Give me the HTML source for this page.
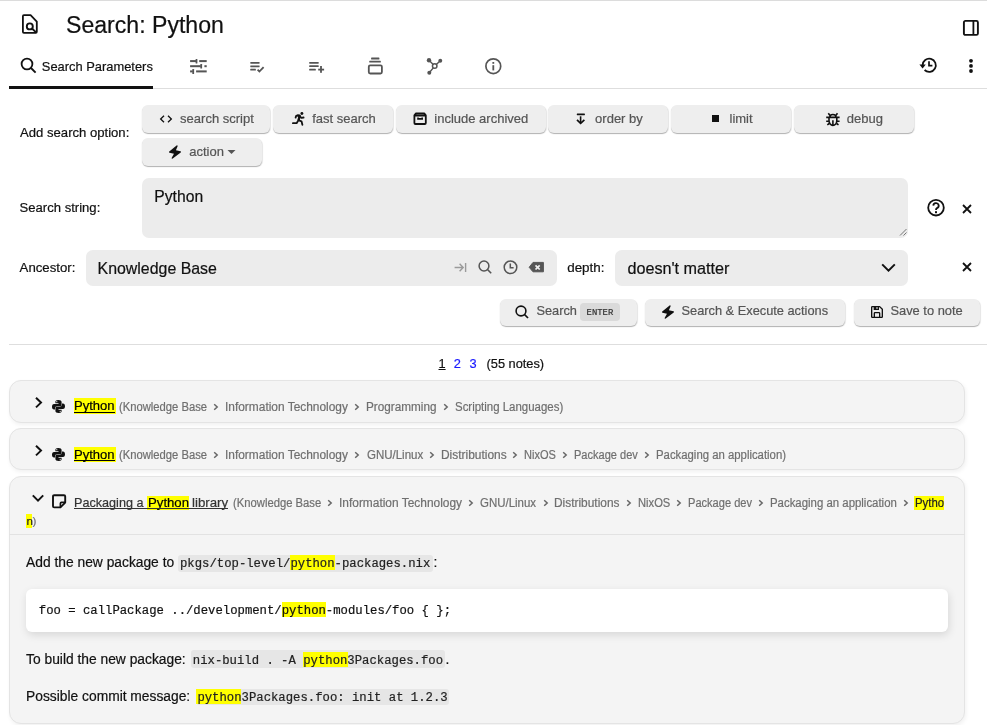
<!DOCTYPE html>
<html><head><meta charset="utf-8">
<style>
html,body{margin:0;padding:0;}
body{width:987px;height:725px;overflow:hidden;background:#fff;position:relative;font-family:"Liberation Sans",sans-serif;color:#222;}
.a{position:absolute;}
.t{position:absolute;line-height:1;white-space:nowrap;-webkit-text-stroke:0.2px currentColor;}
svg{position:absolute;display:block;}
.btn{position:absolute;background:#eeeeee;border-radius:6px;box-shadow:0 1px 1px rgba(0,0,0,.25), 1px 1px 1px rgba(0,0,0,.08);}
.bt{position:absolute;line-height:1;white-space:nowrap;font-size:13px;color:#555;-webkit-text-stroke:0.2px currentColor;}
.inp{position:absolute;background:#ececec;border-radius:7px;}
.card{position:absolute;left:9px;width:956px;background:#f4f4f4;border:1px solid #e4e4e4;border-radius:12px;box-sizing:border-box;box-shadow:1px 2px 4px rgba(0,0,0,.06);}
.bc{color:#777;font-size:11.6px;}
.hl{background:#ffff00;color:#222;}
.u{text-decoration:underline;}
.mono{font-family:"Liberation Mono",monospace;font-size:12.27px;}
.ic{background:#e6e6e6;border-radius:3px;}
#root{position:relative;width:987px;height:725px;overflow:hidden;background:#fff;will-change:transform;}
</style></head><body><div id="root">
<!-- top border -->
<div class="a" style="left:0;top:0;width:987px;height:1px;background:#dcdcdc"></div>

<!-- note icon: file-find -->
<svg style="left:18px;top:10px" width="24" height="28" viewBox="0 0 24 28">
  <path d="M4.9 6.2 Q4.9 5.2 5.9 5.2 H12.6 L18.8 11.6 V21.8 Q18.8 22.8 17.8 22.8 H5.9 Q4.9 22.8 4.9 21.8 Z" fill="none" stroke="#111" stroke-width="1.8" stroke-linejoin="round"/>
  <circle cx="11.8" cy="16.4" r="3" fill="none" stroke="#111" stroke-width="1.9"/>
  <path d="M13.9 18.5 L18.4 22.6" stroke="#111" stroke-width="1.9"/>
</svg>
<div class="t" style="left:66px;top:13.5px;font-size:23.1px;color:#111">Search: Python</div>

<!-- sidebar toggle -->
<svg style="left:962px;top:19px" width="18" height="18" viewBox="0 0 18 18">
  <rect x="1.9" y="1.9" width="14" height="14" rx="1.5" fill="none" stroke="#111" stroke-width="1.9"/>
  <path d="M11.4 2 V16" stroke="#111" stroke-width="1.8"/>
</svg>

<!-- tab bar -->
<div class="a" style="left:9px;top:88px;width:978px;height:1px;background:#dedede"></div>
<div class="a" style="left:9px;top:86px;width:144px;height:3px;background:#111"></div>
<svg style="left:20px;top:57px" width="17" height="17" viewBox="0 0 17 17">
  <circle cx="7" cy="7" r="5.4" fill="none" stroke="#111" stroke-width="1.8"/>
  <path d="M11 11 L15.6 15.6" stroke="#111" stroke-width="1.9"/>
</svg>
<div class="t" style="left:41.8px;top:61.1px;font-size:12.9px;color:#111">Search Parameters</div>

<!-- slider icon -->
<svg style="left:189px;top:58px" width="19" height="17" viewBox="0 0 19 17">
  <g fill="#555">
    <rect x="1.1" y="2.1" width="6" height="2"/><rect x="6.6" y="1" width="1.8" height="4.6" rx=".5"/><rect x="10.2" y="2.1" width="7.5" height="2"/>
    <rect x="1.1" y="7.2" width="10.7" height="2"/><rect x="11.3" y="5.9" width="1.8" height="4.7" rx=".5"/><rect x="15.4" y="7.2" width="2.3" height="2"/>
    <rect x="1.1" y="12.4" width="2.7" height="2"/><rect x="3.3" y="11" width="1.8" height="4.9" rx=".5"/><rect x="7.1" y="12.4" width="10.6" height="2"/>
  </g>
</svg>
<!-- list-check -->
<svg style="left:249px;top:61px" width="16" height="13" viewBox="0 0 16 13">
  <g fill="#555"><rect x="1.3" y="0.9" width="9.3" height="1.8" rx=".4"/><rect x="1.3" y="4.4" width="9.3" height="1.8" rx=".4"/><rect x="1.3" y="7.8" width="5.6" height="1.8" rx=".4"/></g>
  <path d="M8.6 8.6 L10.4 10.5 L14.6 6.1" fill="none" stroke="#555" stroke-width="1.8"/>
</svg>
<!-- list-plus -->
<svg style="left:308px;top:61px" width="17" height="13" viewBox="0 0 17 13">
  <g fill="#555"><rect x="1.2" y="0.9" width="9.5" height="1.8" rx=".4"/><rect x="1.2" y="4.3" width="9.5" height="1.8" rx=".4"/><rect x="1.2" y="7.8" width="6.6" height="1.8" rx=".4"/>
  <rect x="12.1" y="5" width="1.8" height="6.8"/><rect x="10.2" y="7.7" width="5.9" height="1.8"/></g>
</svg>
<!-- collection -->
<svg style="left:367px;top:57px" width="17" height="19" viewBox="0 0 17 19">
  <g fill="#555"><rect x="4.1" y="0.6" width="8.3" height="1.8" rx=".5"/><rect x="2.3" y="3.8" width="11.5" height="1.8" rx=".4"/></g>
  <rect x="1.8" y="8.3" width="13.1" height="8.2" rx="1.4" fill="none" stroke="#555" stroke-width="1.8"/>
</svg>
<!-- network -->
<svg style="left:425px;top:57px" width="19" height="19" viewBox="0 0 19 19">
  <g fill="#555"><circle cx="4" cy="3.3" r="2.2"/><circle cx="15.3" cy="3.7" r="1.95"/><circle cx="4.3" cy="15.7" r="2"/></g>
  <path d="M4 3.3 L9.7 9.1 M15.3 3.7 L9.7 9.1 M4.3 15.7 L9.7 9.1" stroke="#555" stroke-width="1.4"/>
  <circle cx="9.7" cy="9.1" r="2.25" fill="#fff" stroke="#555" stroke-width="1.5"/>
</svg>
<!-- info -->
<svg style="left:484px;top:57px" width="19" height="19" viewBox="0 0 19 19">
  <circle cx="9.3" cy="9.2" r="7.4" fill="none" stroke="#555" stroke-width="1.7"/>
  <rect x="8.4" y="8.2" width="1.8" height="5.2" fill="#555"/><rect x="8.4" y="5" width="1.8" height="1.8" fill="#555"/>
</svg>
<!-- history -->
<svg style="left:918.2px;top:56.4px" width="20" height="18" viewBox="0 0 20 18">
  <path d="M4.6 9.2 A6.6 6.6 0 1 1 6.6 14" fill="none" stroke="#111" stroke-width="1.8"/>
  <path d="M1.4 8.6 L7.8 8.6 L4.6 12.4 Z" fill="#111"/>
  <path d="M11 5.2 V9.6 H14.4" fill="none" stroke="#111" stroke-width="1.7"/>
</svg>
<!-- dots -->
<svg style="left:967px;top:57px" width="8" height="18" viewBox="0 0 8 18">
  <g fill="#111"><circle cx="4" cy="3.8" r="1.9"/><circle cx="4" cy="8.9" r="1.9"/><circle cx="4" cy="14" r="1.9"/></g>
</svg>

<!-- ===== Search options ===== -->
<div class="t" style="left:20.1px;top:126.1px;font-size:13.1px;color:#111">Add search option:</div>

<div class="btn" style="left:142px;top:105px;width:128px;height:28px"></div>
<svg style="left:158px;top:111px" width="16" height="16" viewBox="0 0 24 24"><path fill="#111" d="M8.293 6.293 2.586 12l5.707 5.707 1.414-1.414L5.414 12l4.293-4.293zm7.414 11.414L21.414 12l-5.707-5.707-1.414 1.414L18.586 12l-4.293 4.293z"/></svg>
<div class="bt" style="left:180.1px;top:111.7px">search script</div>

<div class="btn" style="left:273px;top:105px;width:120px;height:28px"></div>
<svg style="left:286px;top:106px" width="24" height="24" viewBox="0 0 24 24">
  <circle cx="15.9" cy="7.5" r="1.45" fill="#111"/>
  <path d="M11.4 9.4 L13.6 9.8 L12.6 14.2" fill="none" stroke="#111" stroke-width="2.4" stroke-linejoin="round"/>
  <path d="M11.6 9.4 L10.2 9.9 L9.6 11.6 M13.4 10 L15.4 11.8 L17.6 11.5 M12.4 14.3 L10.6 17.2 L6.9 17.2 M12.8 14.4 L15.5 15.3 L16.4 18.8" fill="none" stroke="#111" stroke-width="1.8" stroke-linejoin="round" stroke-linecap="round"/>
</svg>
<div class="bt" style="left:312.2px;top:111.7px">fast search</div>

<div class="btn" style="left:396px;top:105px;width:150px;height:28px"></div>
<svg style="left:408px;top:106px" width="24" height="24" viewBox="0 0 24 24">
  <path d="M6.4 17 Q6.4 18 7.4 18 H16.8 Q17.8 18 17.8 17 V9.4 L16.2 7.4 H8 L6.4 9.4 Z M6.4 9.5 H17.8" fill="none" stroke="#111" stroke-width="1.8" stroke-linejoin="round"/>
  <path d="M10 11.6 V12.9 H14.2 V11.6" fill="none" stroke="#111" stroke-width="1.6"/>
</svg>
<div class="bt" style="left:434.3px;top:111.7px">include archived</div>

<div class="btn" style="left:548px;top:105px;width:120px;height:28px"></div>
<svg style="left:574px;top:111px" width="14" height="16" viewBox="0 0 14 16">
  <rect x="2.8" y="2.5" width="8.1" height="1.7" rx=".4" fill="#111"/>
  <path d="M6.6 5.3 V12.2" stroke="#111" stroke-width="1.6"/>
  <path d="M3 8.9 L6.6 12.4 L10.4 8.9" fill="none" stroke="#111" stroke-width="1.7"/>
</svg>
<div class="bt" style="left:595.1px;top:111.7px">order by</div>

<div class="btn" style="left:671px;top:105px;width:120px;height:28px"></div>
<div class="a" style="left:712px;top:115px;width:7px;height:7px;background:#111"></div>
<div class="bt" style="left:729.5px;top:111.7px">limit</div>

<div class="btn" style="left:794px;top:105px;width:120px;height:28px"></div>
<svg style="left:820px;top:106px" width="24" height="24" viewBox="0 0 24 24">
  <path d="M9.8 11.4 A3.1 2.9 0 0 1 16 11.4" fill="none" stroke="#111" stroke-width="1.6"/>
  <path d="M9 11.4 V14.6 A3.9 4.8 0 0 0 16.8 14.6 V11.4" fill="none" stroke="#111" stroke-width="1.6"/>
  <path d="M6.2 11.4 H19.6 M6.2 15.2 H8.9 M16.9 15.2 H19.6 M8.3 7.3 L10 9.5 M17.5 7.3 L15.8 9.5 M7.3 18.8 L9.2 17.5 M18.5 18.8 L16.6 17.5 M12.9 14.3 V19.2" fill="none" stroke="#111" stroke-width="1.6"/>
</svg>
<div class="bt" style="left:846.8px;top:111.7px">debug</div>

<div class="btn" style="left:142px;top:138px;width:120px;height:28px"></div>
<svg style="left:167px;top:143px" width="16" height="18" viewBox="0 0 24 24"><path fill="#111" d="M20.98 11.802a.995.995 0 0 0-.738-.771l-6.86-1.716 2.537-5.921a.998.998 0 0 0-.317-1.192.996.996 0 0 0-1.234.024l-11 9a1 1 0 0 0 .39 1.744l6.719 1.681-3.345 5.854A1.001 1.001 0 0 0 8 22a.995.995 0 0 0 .6-.2l12-9a1 1 0 0 0 .38-.998z"/></svg>
<div class="bt" style="left:189.2px;top:144.7px">action</div>
<svg style="left:227px;top:149px" width="9" height="6" viewBox="0 0 9 6"><path d="M0.5 1 H8.5 L4.5 5 Z" fill="#555"/></svg>

<!-- ===== Search string ===== -->
<div class="t" style="left:19.6px;top:201.3px;font-size:13.08px;color:#111">Search string:</div>
<div class="inp" style="left:142px;top:178px;width:766px;height:59.5px"></div>
<svg style="left:896px;top:225px" width="12" height="12" viewBox="0 0 12 12"><path d="M10.5 4 L4 10.5 M10.5 7.5 L7.5 10.5" stroke="#777" stroke-width="1"/></svg>
<div class="t" style="left:154.3px;top:189px;font-size:15.7px;color:#111">Python</div>
<svg style="left:926px;top:198px" width="20" height="20" viewBox="0 0 20 20">
  <circle cx="10" cy="9.7" r="7.8" fill="none" stroke="#111" stroke-width="1.8"/>
  <path d="M7.3 7.6 A2.7 2.6 0 1 1 11 10.1 C10.2 10.5 10 11 10 12" fill="none" stroke="#111" stroke-width="1.8"/>
  <rect x="9" y="13.2" width="2" height="2" fill="#111"/>
</svg>
<svg style="left:960px;top:202px" width="14" height="14" viewBox="0 0 14 14"><path d="M3 3 L11 11 M11 3 L3 11" stroke="#111" stroke-width="1.8"/></svg>

<!-- ===== Ancestor ===== -->
<div class="t" style="left:19.6px;top:261.3px;font-size:13.19px;color:#111">Ancestor:</div>
<div class="inp" style="left:86px;top:250px;width:471px;height:35.5px"></div>
<div class="t" style="left:97.6px;top:261.3px;font-size:15.9px;color:#111">Knowledge Base</div>
<svg style="left:453px;top:261px" width="15" height="13" viewBox="0 0 15 13"><path d="M1.6 6.5 H10 M6.6 2.8 L10.2 6.5 L6.6 10.2 M12.6 2 V11" fill="none" stroke="#9a9a9a" stroke-width="1.4"/></svg>
<svg style="left:477px;top:259px" width="16" height="16" viewBox="0 0 16 16">
  <circle cx="7" cy="7" r="4.9" fill="none" stroke="#555" stroke-width="1.5"/>
  <path d="M10.5 10.5 L14.2 14.2" stroke="#555" stroke-width="1.6"/>
</svg>
<svg style="left:502px;top:259px" width="17" height="17" viewBox="0 0 17 17">
  <circle cx="8.5" cy="8.3" r="6.3" fill="none" stroke="#555" stroke-width="1.5"/>
  <path d="M8.3 4.6 V8.7 H11.6" fill="none" stroke="#555" stroke-width="1.5"/>
</svg>
<svg style="left:528px;top:261px" width="17" height="13" viewBox="0 0 17 13">
  <path d="M1.2 6.3 L5 1.4 H15.4 V10.8 H5 Z" fill="#555" stroke="#555" stroke-width="1" stroke-linejoin="round"/>
  <path d="M7.5 4.3 L11.7 8.5 M11.7 4.3 L7.5 8.5" stroke="#eee" stroke-width="1.7"/>
</svg>
<div class="t" style="left:567.2px;top:260.9px;font-size:13.4px;color:#111">depth:</div>
<div class="inp" style="left:615px;top:250px;width:293px;height:35.5px"></div>
<div class="t" style="left:627.4px;top:260.19px;font-size:16.2px;color:#111">doesn't matter</div>
<svg style="left:880px;top:261px" width="17" height="13" viewBox="0 0 17 13"><path d="M2.2 3.4 L8.5 9.6 L14.8 3.4" fill="none" stroke="#111" stroke-width="2"/></svg>
<svg style="left:960px;top:260px" width="14" height="14" viewBox="0 0 14 14"><path d="M3 3 L11 11 M11 3 L3 11" stroke="#111" stroke-width="1.8"/></svg>

<!-- ===== action buttons ===== -->
<div class="btn" style="left:499.5px;top:298.5px;width:137px;height:27.5px"></div>
<svg style="left:514px;top:304px" width="16" height="16" viewBox="0 0 16 16">
  <circle cx="7" cy="7" r="4.9" fill="none" stroke="#111" stroke-width="1.6"/>
  <path d="M10.5 10.5 L14 14" stroke="#111" stroke-width="1.7"/>
</svg>
<div class="bt" style="left:536.4px;top:305.3px;font-size:12.8px">Search</div>
<div class="a" style="left:580.3px;top:303px;width:39.7px;height:17.9px;background:#dadada;border-radius:4px"></div>
<div class="t" style="left:586.6px;top:308.8px;font-size:8.9px;color:#333;font-weight:normal;font-family:'Liberation Mono',monospace">ENTER</div>

<div class="btn" style="left:644.5px;top:298.5px;width:200.5px;height:27.5px"></div>
<svg style="left:660px;top:303px" width="16" height="18" viewBox="0 0 24 24"><path fill="#111" d="M20.98 11.802a.995.995 0 0 0-.738-.771l-6.86-1.716 2.537-5.921a.998.998 0 0 0-.317-1.192.996.996 0 0 0-1.234.024l-11 9a1 1 0 0 0 .39 1.744l6.719 1.681-3.345 5.854A1.001 1.001 0 0 0 8 22a.995.995 0 0 0 .6-.2l12-9a1 1 0 0 0 .38-.998z"/></svg>
<div class="bt" style="left:681.5px;top:305.3px;font-size:12.8px">Search &amp; Execute actions</div>

<div class="btn" style="left:853.5px;top:298.5px;width:126px;height:27.5px"></div>
<svg style="left:869px;top:304px" width="16" height="16" viewBox="0 0 24 24"><path fill="#111" d="M5 21h14a2 2 0 0 0 2-2V8a1 1 0 0 0-.29-.71l-4-4A1 1 0 0 0 16 3H5a2 2 0 0 0-2 2v14a2 2 0 0 0 2 2zm10-2H9v-5h6zM13 7h-2V5h2zM5 5h2v4h8V5h.59L19 8.41V19h-2v-5a2 2 0 0 0-2-2H9a2 2 0 0 0-2 2v5H5z"/></svg>
<div class="bt" style="left:890.4px;top:305.3px;font-size:12.9px">Save to note</div>

<div class="a" style="left:9px;top:344px;width:978px;height:1px;background:#dedede"></div>

<!-- pagination -->
<div class="t" style="left:438.5px;top:358.2px;font-size:12.8px;color:#111"><span class="u">1</span></div>
<div class="t" style="left:453.8px;top:358.2px;font-size:12.8px;color:#1a1aff">2</div>
<div class="t" style="left:469.4px;top:358.2px;font-size:12.8px;color:#1a1aff">3</div>
<div class="t" style="left:486.5px;top:358.2px;font-size:12.8px;color:#111">(55 notes)</div>

<!-- RESULTS -->
<div class="card" style="top:380px;height:42.5px"></div>
<div class="t" style="left:118.6px;top:400.64px;font-size:12.0px;color:#6f6f6f;transform:scaleX(0.9368);transform-origin:0 0">(Knowledge Base</div>
<svg style="left:212.9px;top:402.8px" width="6" height="8" viewBox="0 0 6 8"><path d="M1.2 1.2 L4.2 4 L1.2 6.8" fill="none" stroke="#666" stroke-width="1.5"/></svg>
<div class="t" style="left:225.3px;top:400.64px;font-size:12.0px;color:#6f6f6f;transform:scaleX(0.9925);transform-origin:0 0">Information Technology</div>
<svg style="left:354.4px;top:402.8px" width="6" height="8" viewBox="0 0 6 8"><path d="M1.2 1.2 L4.2 4 L1.2 6.8" fill="none" stroke="#666" stroke-width="1.5"/></svg>
<div class="t" style="left:366.3px;top:400.64px;font-size:12.0px;color:#6f6f6f;transform:scaleX(0.9787);transform-origin:0 0">Programming</div>
<svg style="left:443.0px;top:402.8px" width="6" height="8" viewBox="0 0 6 8"><path d="M1.2 1.2 L4.2 4 L1.2 6.8" fill="none" stroke="#666" stroke-width="1.5"/></svg>
<div class="t" style="left:454.9px;top:400.64px;font-size:12.0px;color:#6f6f6f;transform:scaleX(0.9542);transform-origin:0 0">Scripting Languages)</div>
<svg style="left:34px;top:396.0px" width="10" height="13" viewBox="0 0 10 13"><path d="M2 1.8 L7 6.6 L2 11.4" fill="none" stroke="#111" stroke-width="2"/></svg>
<svg style="left:51px;top:399.0px" width="15" height="15" viewBox="0 0 15 15"><path fill="#111" d="M7.3 1 C4.6 1 4.4 2.1 4.4 3 V4.3 H7.5 V5 H3.1 C1.6 5 1 6.2 1 7.8 C1 9.5 1.7 10.6 3 10.6 H4 V9.2 C4 8.1 4.9 7.3 6 7.3 H9 C9.9 7.3 10.6 6.6 10.6 5.7 V3 C10.6 1.8 9.5 1 7.3 1 Z M5.8 2.1 A0.6 0.6 0 1 1 5.8 3.3 A0.6 0.6 0 1 1 5.8 2.1 Z M7.7 14 C10.4 14 10.6 12.9 10.6 12 V10.7 H7.5 V10 H11.9 C13.4 10 14 8.8 14 7.2 C14 5.5 13.3 4.4 12 4.4 H11 V5.8 C11 6.9 10.1 7.7 9 7.7 H6 C5.1 7.7 4.4 8.4 4.4 9.3 V12 C4.4 13.2 5.5 14 7.7 14 Z M9.2 11.7 A0.6 0.6 0 1 1 9.2 12.9 A0.6 0.6 0 1 1 9.2 11.7 Z"/></svg>
<div class="a" style="left:74px;top:398.4px;width:42px;height:15.2px;background:#ffff00"></div>
<div class="t" style="left:74.4px;top:399.46px;font-size:13.04px;color:#000;transform:scaleX(1.0005);transform-origin:0 0">Python</div>
<div class="a" style="left:74.4px;top:412.0px;width:40.8px;height:1px;background:#000"></div>
<div class="card" style="top:428px;height:41.5px"></div>
<div class="t" style="left:118.6px;top:448.74px;font-size:12.0px;color:#6f6f6f;transform:scaleX(0.9368);transform-origin:0 0">(Knowledge Base</div>
<svg style="left:212.9px;top:450.9px" width="6" height="8" viewBox="0 0 6 8"><path d="M1.2 1.2 L4.2 4 L1.2 6.8" fill="none" stroke="#666" stroke-width="1.5"/></svg>
<div class="t" style="left:225.3px;top:448.74px;font-size:12.0px;color:#6f6f6f;transform:scaleX(0.9925);transform-origin:0 0">Information Technology</div>
<svg style="left:354.4px;top:450.9px" width="6" height="8" viewBox="0 0 6 8"><path d="M1.2 1.2 L4.2 4 L1.2 6.8" fill="none" stroke="#666" stroke-width="1.5"/></svg>
<div class="t" style="left:366.7px;top:448.74px;font-size:12.0px;color:#6f6f6f;transform:scaleX(0.9576);transform-origin:0 0">GNU/Linux</div>
<svg style="left:429.1px;top:450.9px" width="6" height="8" viewBox="0 0 6 8"><path d="M1.2 1.2 L4.2 4 L1.2 6.8" fill="none" stroke="#666" stroke-width="1.5"/></svg>
<div class="t" style="left:440.5px;top:448.74px;font-size:12.0px;color:#6f6f6f;transform:scaleX(0.9950);transform-origin:0 0">Distributions</div>
<svg style="left:512.4px;top:450.9px" width="6" height="8" viewBox="0 0 6 8"><path d="M1.2 1.2 L4.2 4 L1.2 6.8" fill="none" stroke="#666" stroke-width="1.5"/></svg>
<div class="t" style="left:524.3px;top:448.74px;font-size:12.0px;color:#6f6f6f;transform:scaleX(0.9201);transform-origin:0 0">NixOS</div>
<svg style="left:562.4px;top:450.9px" width="6" height="8" viewBox="0 0 6 8"><path d="M1.2 1.2 L4.2 4 L1.2 6.8" fill="none" stroke="#666" stroke-width="1.5"/></svg>
<div class="t" style="left:574.3px;top:448.74px;font-size:12.0px;color:#6f6f6f;transform:scaleX(0.9198);transform-origin:0 0">Package dev</div>
<svg style="left:644.3px;top:450.9px" width="6" height="8" viewBox="0 0 6 8"><path d="M1.2 1.2 L4.2 4 L1.2 6.8" fill="none" stroke="#666" stroke-width="1.5"/></svg>
<div class="t" style="left:656.2px;top:448.74px;font-size:12.0px;color:#6f6f6f;transform:scaleX(0.9461);transform-origin:0 0">Packaging an application)</div>
<svg style="left:34px;top:444.1px" width="10" height="13" viewBox="0 0 10 13"><path d="M2 1.8 L7 6.6 L2 11.4" fill="none" stroke="#111" stroke-width="2"/></svg>
<svg style="left:51px;top:447.1px" width="15" height="15" viewBox="0 0 15 15"><path fill="#111" d="M7.3 1 C4.6 1 4.4 2.1 4.4 3 V4.3 H7.5 V5 H3.1 C1.6 5 1 6.2 1 7.8 C1 9.5 1.7 10.6 3 10.6 H4 V9.2 C4 8.1 4.9 7.3 6 7.3 H9 C9.9 7.3 10.6 6.6 10.6 5.7 V3 C10.6 1.8 9.5 1 7.3 1 Z M5.8 2.1 A0.6 0.6 0 1 1 5.8 3.3 A0.6 0.6 0 1 1 5.8 2.1 Z M7.7 14 C10.4 14 10.6 12.9 10.6 12 V10.7 H7.5 V10 H11.9 C13.4 10 14 8.8 14 7.2 C14 5.5 13.3 4.4 12 4.4 H11 V5.8 C11 6.9 10.1 7.7 9 7.7 H6 C5.1 7.7 4.4 8.4 4.4 9.3 V12 C4.4 13.2 5.5 14 7.7 14 Z M9.2 11.7 A0.6 0.6 0 1 1 9.2 12.9 A0.6 0.6 0 1 1 9.2 11.7 Z"/></svg>
<div class="a" style="left:74px;top:446.5px;width:42px;height:15.2px;background:#ffff00"></div>
<div class="t" style="left:74.4px;top:447.56px;font-size:13.04px;color:#000;transform:scaleX(1.0005);transform-origin:0 0">Python</div>
<div class="a" style="left:74.4px;top:460.1px;width:40.8px;height:1px;background:#000"></div>
<div class="card" style="top:475.5px;height:248px"></div>
<div class="t" style="left:232.6px;top:496.74px;font-size:12.0px;color:#6f6f6f;transform:scaleX(0.9378);transform-origin:0 0">(Knowledge Base</div>
<svg style="left:327.0px;top:498.9px" width="6" height="8" viewBox="0 0 6 8"><path d="M1.2 1.2 L4.2 4 L1.2 6.8" fill="none" stroke="#666" stroke-width="1.5"/></svg>
<div class="t" style="left:338.9px;top:496.74px;font-size:12.0px;color:#6f6f6f;transform:scaleX(0.9933);transform-origin:0 0">Information Technology</div>
<svg style="left:468.1px;top:498.9px" width="6" height="8" viewBox="0 0 6 8"><path d="M1.2 1.2 L4.2 4 L1.2 6.8" fill="none" stroke="#666" stroke-width="1.5"/></svg>
<div class="t" style="left:480.2px;top:496.74px;font-size:12.0px;color:#6f6f6f;transform:scaleX(0.9559);transform-origin:0 0">GNU/Linux</div>
<svg style="left:542.5px;top:498.9px" width="6" height="8" viewBox="0 0 6 8"><path d="M1.2 1.2 L4.2 4 L1.2 6.8" fill="none" stroke="#666" stroke-width="1.5"/></svg>
<div class="t" style="left:554.2px;top:496.74px;font-size:12.0px;color:#6f6f6f;transform:scaleX(0.9920);transform-origin:0 0">Distributions</div>
<svg style="left:625.9px;top:498.9px" width="6" height="8" viewBox="0 0 6 8"><path d="M1.2 1.2 L4.2 4 L1.2 6.8" fill="none" stroke="#666" stroke-width="1.5"/></svg>
<div class="t" style="left:637.9px;top:496.74px;font-size:12.0px;color:#6f6f6f;transform:scaleX(0.9316);transform-origin:0 0">NixOS</div>
<svg style="left:676.4px;top:498.9px" width="6" height="8" viewBox="0 0 6 8"><path d="M1.2 1.2 L4.2 4 L1.2 6.8" fill="none" stroke="#666" stroke-width="1.5"/></svg>
<div class="t" style="left:688px;top:496.74px;font-size:12.0px;color:#6f6f6f;transform:scaleX(0.9227);transform-origin:0 0">Package dev</div>
<svg style="left:758.2px;top:498.9px" width="6" height="8" viewBox="0 0 6 8"><path d="M1.2 1.2 L4.2 4 L1.2 6.8" fill="none" stroke="#666" stroke-width="1.5"/></svg>
<div class="t" style="left:769.5px;top:496.74px;font-size:12.0px;color:#6f6f6f;transform:scaleX(0.9505);transform-origin:0 0">Packaging an application</div>
<svg style="left:902.5px;top:498.9px" width="6" height="8" viewBox="0 0 6 8"><path d="M1.2 1.2 L4.2 4 L1.2 6.8" fill="none" stroke="#666" stroke-width="1.5"/></svg>
<svg style="left:31px;top:493px" width="14" height="11" viewBox="0 0 14 11"><path d="M1.8 2.4 L7 7.6 L12.2 2.4" fill="none" stroke="#111" stroke-width="2"/></svg>
<svg style="left:50.5px;top:494px" width="16" height="15" viewBox="0 0 16 15">
  <path d="M2 2.4 Q2 1.2 3.2 1.2 H13 Q14.2 1.2 14.2 2.4 V8.6 L9.4 13.4 H3.2 Q2 13.4 2 12.2 Z" fill="none" stroke="#111" stroke-width="1.9" stroke-linejoin="round"/>
  <path d="M14 8.4 H10.4 Q9.4 8.4 9.4 9.4 V13.2" fill="none" stroke="#111" stroke-width="1.7"/>
</svg>
<div class="a" style="left:147px;top:495.6px;width:41.8px;height:14.6px;background:#ffff00"></div>
<div class="t" style="left:74.3px;top:495.73px;font-size:13.2px;color:#333;transform:scaleX(0.9566);transform-origin:0 0">Packaging a</div>
<div class="t" style="left:147.5px;top:495.73px;font-size:13.2px;color:#000;transform:scaleX(0.9992);transform-origin:0 0">Python</div>
<div class="t" style="left:191.9px;top:495.73px;font-size:13.2px;color:#333;transform:scaleX(1.0082);transform-origin:0 0">library</div>
<div class="a" style="left:74.3px;top:507.6px;width:154px;height:1px;background:#333"></div>
<div class="a" style="left:913.8px;top:496.2px;width:30.5px;height:14.2px;background:#ffff00"></div>
<div class="t" style="left:914.6px;top:496.74px;font-size:12.0px;color:#222;transform:scaleX(0.9455);transform-origin:0 0">Pytho</div>
<div class="a" style="left:26px;top:514px;width:6px;height:13.5px;background:#ffff00"></div>
<div class="t" style="left:26.4px;top:514.9px;font-size:11.6px;color:#222">n</div>
<div class="t" style="left:32.4px;top:514.9px;font-size:11.6px;color:#6f6f6f">)</div>
<div class="a" style="left:9px;top:534px;width:956px;height:1px;background:#e2e2e2"></div>
<div class="t" style="left:26.1px;top:556.42px;font-size:13.8px;color:#111">Add the new package to</div>
<div class="a ic" style="left:178.4px;top:554.6px;width:254.5px;height:17.0px"></div>
<div class="a" style="left:289.9px;top:554.8px;width:45.2px;height:15.0px;background:#ffff00"></div>
<div class="t mono" style="left:180px;top:558.30px;color:#222">pkgs/top-level/python-packages.nix</div>
<div class="t" style="left:433.4px;top:556.42px;font-size:13.8px;color:#111">:</div>
<div class="a" style="left:26px;top:588.5px;width:922px;height:43.5px;background:#fff;border-radius:6px;box-shadow:1px 3px 9px rgba(0,0,0,.12)"></div>
<div class="a" style="left:282.1px;top:601.9px;width:44.0px;height:14.8px;background:#ffff00"></div>
<div class="t mono" style="left:38.8px;top:605.30px;color:#111">foo = callPackage ../development/python-modules/foo { };</div>
<div class="t" style="left:26.1px;top:653.32px;font-size:13.8px;color:#111">To build the new package:</div>
<div class="a ic" style="left:190.8px;top:650.3px;width:254.0px;height:17.9px"></div>
<div class="a" style="left:303px;top:651.9px;width:45.0px;height:15.0px;background:#ffff00"></div>
<div class="t mono" style="left:192.8px;top:655.30px;color:#222">nix-build . -A python3Packages.foo</div>
<div class="t" style="left:445.5px;top:653.32px;font-size:13.8px;color:#111">.</div>
<div class="t" style="left:26.1px;top:690.12px;font-size:13.8px;color:#111">Possible commit message:</div>
<div class="a ic" style="left:195.6px;top:688.6px;width:253.4px;height:16.8px"></div>
<div class="a" style="left:195.8px;top:689.1px;width:45.2px;height:14.5px;background:#ffff00"></div>
<div class="t mono" style="left:197.4px;top:692.00px;color:#222">python3Packages.foo: init at 1.2.3</div>
</div></body></html>
